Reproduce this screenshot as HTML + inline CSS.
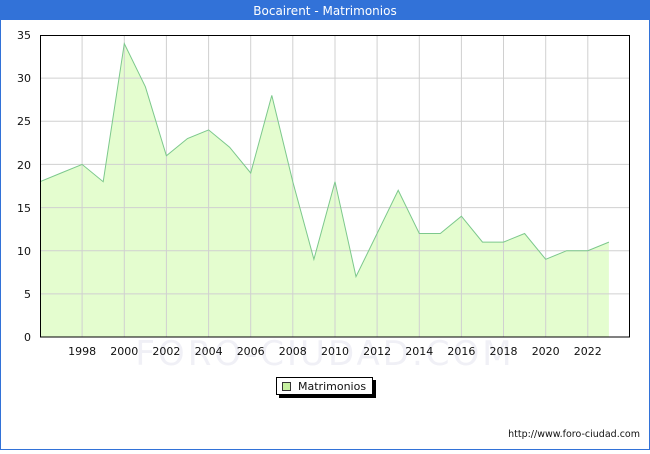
<!DOCTYPE html>
<html><head><meta charset="utf-8"><style>
html,body{margin:0;padding:0;background:#fff;}
body{width:650px;height:450px;overflow:hidden;font-family:"DejaVu Sans","Liberation Sans",sans-serif;}
</style></head><body>
<svg width="650" height="450" xmlns="http://www.w3.org/2000/svg" font-family="DejaVu Sans, Liberation Sans, sans-serif">
<rect x="0" y="0" width="650" height="450" fill="#fff"/>
<rect x="0.5" y="0.5" width="649" height="449" fill="none" stroke="#3272d8"/>
<rect x="0" y="0" width="650" height="20" fill="#3272d8"/>
<text x="325" y="15" text-anchor="middle" fill="#fff" font-size="12">Bocairent - Matrimonios</text>
<polygon fill="#e4fdcf" stroke="none" points="40,337 40,181.7 61.1,173 82.1,164.4 103.2,181.7 124.3,43.6 145.4,86.8 166.4,155.8 187.5,138.5 208.6,129.9 229.6,147.2 250.7,173 271.8,95.4 292.8,181.7 313.9,259.3 335,181.7 356,276.6 377.1,233.5 398.2,190.3 419.3,233.5 440.3,233.5 461.4,216.2 482.5,242.1 503.5,242.1 524.6,233.5 545.7,259.3 566.7,250.7 587.8,250.7 608.9,242.1 608.9,337"/>
<g stroke="#d0d0d0" stroke-width="1">
<line x1="40" y1="293.9" x2="630" y2="293.9"/><line x1="40" y1="250.7" x2="630" y2="250.7"/>
<line x1="40" y1="207.6" x2="630" y2="207.6"/><line x1="40" y1="164.4" x2="630" y2="164.4"/>
<line x1="40" y1="121.3" x2="630" y2="121.3"/><line x1="40" y1="78.1" x2="630" y2="78.1"/>
<line x1="82.1" y1="35" x2="82.1" y2="337"/><line x1="124.3" y1="35" x2="124.3" y2="337"/>
<line x1="166.4" y1="35" x2="166.4" y2="337"/><line x1="208.6" y1="35" x2="208.6" y2="337"/>
<line x1="250.7" y1="35" x2="250.7" y2="337"/><line x1="292.8" y1="35" x2="292.8" y2="337"/>
<line x1="335" y1="35" x2="335" y2="337"/><line x1="377.1" y1="35" x2="377.1" y2="337"/>
<line x1="419.3" y1="35" x2="419.3" y2="337"/><line x1="461.4" y1="35" x2="461.4" y2="337"/>
<line x1="503.5" y1="35" x2="503.5" y2="337"/><line x1="545.7" y1="35" x2="545.7" y2="337"/>
<line x1="587.8" y1="35" x2="587.8" y2="337"/>
</g>
<polyline fill="none" stroke="#7cc88c" stroke-width="1" points="40,181.7 61.1,173 82.1,164.4 103.2,181.7 124.3,43.6 145.4,86.8 166.4,155.8 187.5,138.5 208.6,129.9 229.6,147.2 250.7,173 271.8,95.4 292.8,181.7 313.9,259.3 335,181.7 356,276.6 377.1,233.5 398.2,190.3 419.3,233.5 440.3,233.5 461.4,216.2 482.5,242.1 503.5,242.1 524.6,233.5 545.7,259.3 566.7,250.7 587.8,250.7 608.9,242.1"/>
<text x="325" y="365" text-anchor="middle" fill="#f0f0f6" font-size="34" letter-spacing="3">FORO-CIUDAD.COM</text>
<rect x="40.5" y="35.5" width="589" height="301.5" fill="none" stroke="#000"/>
<g font-size="11" fill="#111" text-anchor="end">
<text x="31" y="341">0</text><text x="31" y="298">5</text><text x="31" y="255">10</text>
<text x="31" y="212">15</text><text x="31" y="169">20</text><text x="31" y="125">25</text>
<text x="31" y="82">30</text><text x="31" y="39">35</text>
</g>
<g font-size="11" fill="#111" text-anchor="middle">
<text x="82.1" y="355">1998</text><text x="124.3" y="355">2000</text><text x="166.4" y="355">2002</text>
<text x="208.6" y="355">2004</text><text x="250.7" y="355">2006</text><text x="292.8" y="355">2008</text>
<text x="335" y="355">2010</text><text x="377.1" y="355">2012</text><text x="419.3" y="355">2014</text>
<text x="461.4" y="355">2016</text><text x="503.5" y="355">2018</text><text x="545.7" y="355">2020</text>
<text x="587.8" y="355">2022</text>
</g>
<rect x="279" y="380" width="97" height="18" fill="#000"/>
<rect x="276.5" y="377.5" width="96" height="17" fill="#fff" stroke="#000"/>
<rect x="282.5" y="382.5" width="8" height="8" fill="#c6f0a0" stroke="#333"/>
<text x="298" y="390" font-size="11" fill="#111">Matrimonios</text>
<text x="640" y="437" text-anchor="end" font-size="9.5" fill="#111">http://www.foro-ciudad.com</text>
</svg>
</body></html>
